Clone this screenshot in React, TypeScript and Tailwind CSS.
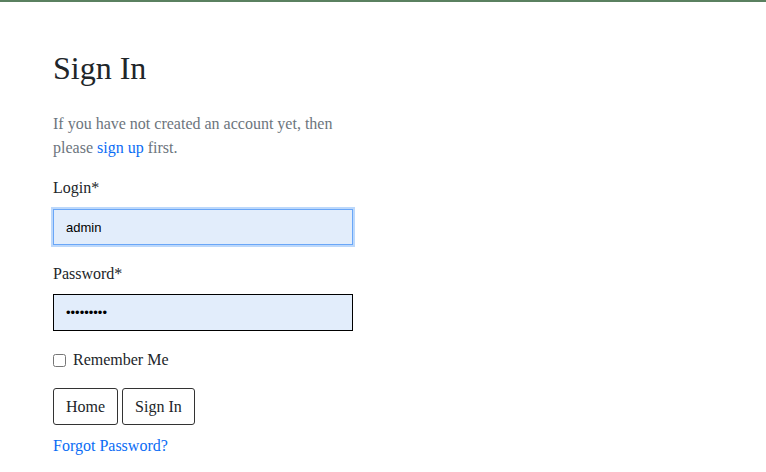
import React from 'react';

export default function App() {
  return (
    <div className="min-h-screen bg-white font-['Liberation_Serif',serif] text-[#212529]">
      <div className="h-[2px] bg-[#5a8060]" />
      <div className="px-[53px] pt-[46px]">
        <h1 className="text-[32px] leading-[40px]">Sign In</h1>
        <p className="mt-[24px] w-[300px] text-[16px] leading-[24px] text-[#6c757d]">
          If you have not created an account yet, then please <a href="#" className="text-[#0a6cf5]">sign up</a> first.
        </p>
        <form className="mt-[16px] flex w-[300px] flex-col" onSubmit={(e) => e.preventDefault()}>
          <label className="text-[16px] leading-[24px]">Login*</label>
          <input
            defaultValue="admin"
            className="mt-[9px] h-[36px] w-full border border-[#6aa7f8] bg-[#e2edfb] px-[12px] font-['Liberation_Sans',sans-serif] text-[13px] text-black shadow-[0_0_0_2px_#bcd8fb] outline-none"
          />
          <label className="mt-[17px] text-[16px] leading-[24px]">Password*</label>
          <input
            type="password"
            defaultValue="password1"
            className="mt-[8px] h-[37px] w-full border border-black bg-[#e2edfb] px-[12px] font-['Liberation_Sans',sans-serif] text-[13px] text-black outline-none"
          />
          <label className="mt-[19px] flex items-center gap-[7px] text-[16px] leading-[20px]">
            <input type="checkbox" className="h-[13px] w-[13px]" />
            Remember Me
          </label>
          <div className="mt-[18px] flex gap-[4px]">
            <button type="button" className="h-[37px] rounded-[3px] border border-[#333] px-[12px] text-[16px]">Home</button>
            <button type="submit" className="h-[37px] rounded-[3px] border border-[#333] px-[12px] text-[16px]">Sign In</button>
          </div>
          <a href="#" className="mt-[11px] text-[16px] leading-[20px] text-[#0a6cf5]">Forgot Password?</a>
        </form>
      </div>
    </div>
  );
}
